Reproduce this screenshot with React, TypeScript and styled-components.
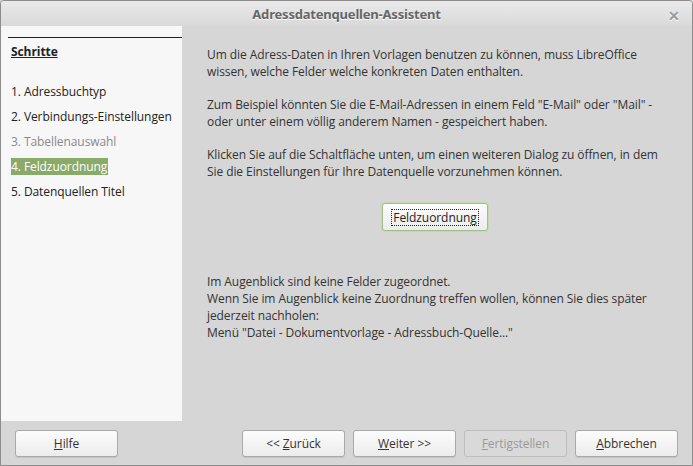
import React from "react";
import styled, { createGlobalStyle } from "styled-components";

const Global = createGlobalStyle`
  html, body { margin: 0; padding: 0; background: #d6d6d6; }
  body { font-family: "Open Sans", "Noto Sans", sans-serif; font-size: 12px; color: #333; letter-spacing: -0.08px; }
`;

const Window = styled.div`
  width: 693px;
  height: 466px;
  box-sizing: border-box;
  border: 1px solid #8c8c8c;
  border-radius: 4px 4px 0 0;
  background: #d6d6d6;
  display: flex;
  flex-direction: column;
  overflow: hidden;
`;

const TitleBar = styled.div`
  height: 25px;
  flex: none;
  display: flex;
  align-items: center;
  justify-content: center;
  position: relative;
  background: linear-gradient(#eaeaea, #d9d9d9);
  font-family: "Noto Sans", sans-serif;
  font-weight: bold;
  font-size: 13px;
  color: #666;
  text-shadow: 0 1px 0 #fff;
  letter-spacing: -0.2px;
`;

const Close = styled.span`
  position: absolute;
  right: 12px;
  top: 5px;
  font-size: 14px;
  color: #9a9a9a;
  font-weight: bold;
`;

const Body = styled.div`
  flex: 1;
  display: flex;
  min-height: 0;
`;

const Sidebar = styled.div`
  width: 181px;
  flex: none;
  background: #f7f7f7;
  padding: 11px 0 0 7px;
  box-sizing: border-box;
  height: 395px;
`;

const Rule = styled.div`
  border-top: 1px solid #222;
  margin-bottom: 5px;
`;

const StepsTitle = styled.div`
  font-weight: bold;
  text-decoration: underline;
  color: #222;
  margin-left: 3px;
  line-height: 17px;
  margin-bottom: 23px;
`;

const Step = styled.div<{ $disabled?: boolean; $active?: boolean }>`
  display: inline-block;
  margin-left: 3px;
  line-height: 17px;
  padding: 0 1px 0 0;
  color: ${(p) => (p.$disabled ? "#8a8a8a" : p.$active ? "#fff" : "#222")};
  background: ${(p) => (p.$active ? "#8aaa6a" : "transparent")};
`;

const StepRow = styled.div`
  height: 25px;
`;

const Content = styled.div`
  flex: 1;
  padding: 20px 0 0 25px;
  color: #333;
`;

const Para = styled.p`
  margin: 0 0 16px 0;
  line-height: 17px;
`;

const Center = styled.div`
  display: flex;
  justify-content: center;
  margin: 23px 0 0 -29px;
  padding-bottom: 42px;
`;

const Button = styled.button`
  width: 103px;
  height: 27px;
  box-sizing: border-box;
  border: 1px solid #a9a9a9;
  border-radius: 3px;
  background: linear-gradient(#fcfcfc, #ececec);
  font-family: "Open Sans", "Noto Sans", sans-serif;
  font-size: 12px;
  letter-spacing: -0.08px;
  color: #333;
  padding: 0;
  box-shadow: 0 1px 0 rgba(0,0,0,0.08);
  &:disabled {
    color: #9a9a9a;
    background: #d9d9d9;
    border-color: #bdbdbd;
    box-shadow: none;
  }
`;

const FocusButton = styled(Button)`
  width: 106px;
  height: 28px;
  border: 1px solid #9fbf85;
  box-shadow: 0 0 0 1px #c4d9b0;
  display: flex;
  align-items: center;
  justify-content: center;
  color: #222;
`;

const FocusLabel = styled.span`
  outline: 1px dotted #222;
  padding: 0 1px;
  line-height: 15px;
`;

const Footer = styled.div`
  height: 44px;
  flex: none;
  display: flex;
  align-items: center;
  padding: 0 14px 0 14px;
  gap: 8px;
`;

const Spacer = styled.div`
  flex: 1;
`;

const U = styled.span`
  text-decoration: underline;
`;

export default function App() {
  return (
    <>
      <Global />
      <Window>
        <TitleBar>
          Adressdatenquellen-Assistent
          <Close>✕</Close>
        </TitleBar>
        <Body>
          <Sidebar>
            <Rule />
            <StepsTitle>Schritte</StepsTitle>
            <StepRow><Step>1. Adressbuchtyp</Step></StepRow>
            <StepRow><Step>2. Verbindungs-Einstellungen</Step></StepRow>
            <StepRow><Step $disabled>3. Tabellenauswahl</Step></StepRow>
            <StepRow><Step $active>4. Feldzuordnung</Step></StepRow>
            <StepRow><Step>5. Datenquellen Titel</Step></StepRow>
          </Sidebar>
          <Content>
            <Para>
              Um die Adress-Daten in Ihren Vorlagen benutzen zu können, muss LibreOffice
              <br />
              wissen, welche Felder welche konkreten Daten enthalten.
            </Para>
            <Para>
              Zum Beispiel könnten Sie die E-Mail-Adressen in einem Feld "E-Mail" oder "Mail" -
              <br />
              oder unter einem völlig anderem Namen - gespeichert haben.
            </Para>
            <Para>
              Klicken Sie auf die Schaltfläche unten, um einen weiteren Dialog zu öffnen, in dem
              <br />
              Sie die Einstellungen für Ihre Datenquelle vorzunehmen können.
            </Para>
            <Center>
              <FocusButton><FocusLabel>Feldzuordnung</FocusLabel></FocusButton>
            </Center>
            <Para>
              Im Augenblick sind keine Felder zugeordnet.
              <br />
              Wenn Sie im Augenblick keine Zuordnung treffen wollen, können Sie dies später
              <br />
              jederzeit nachholen:
              <br />
              Menü "Datei - Dokumentvorlage - Adressbuch-Quelle..."
            </Para>
          </Content>
        </Body>
        <Footer>
          <Button><U>H</U>ilfe</Button>
          <Spacer />
          <Button>&lt;&lt; <U>Z</U>urück</Button>
          <Button><U>W</U>eiter &gt;&gt;</Button>
          <Button disabled><U>F</U>ertigstellen</Button>
          <Button><U>A</U>bbrechen</Button>
        </Footer>
      </Window>
    </>
  );
}
